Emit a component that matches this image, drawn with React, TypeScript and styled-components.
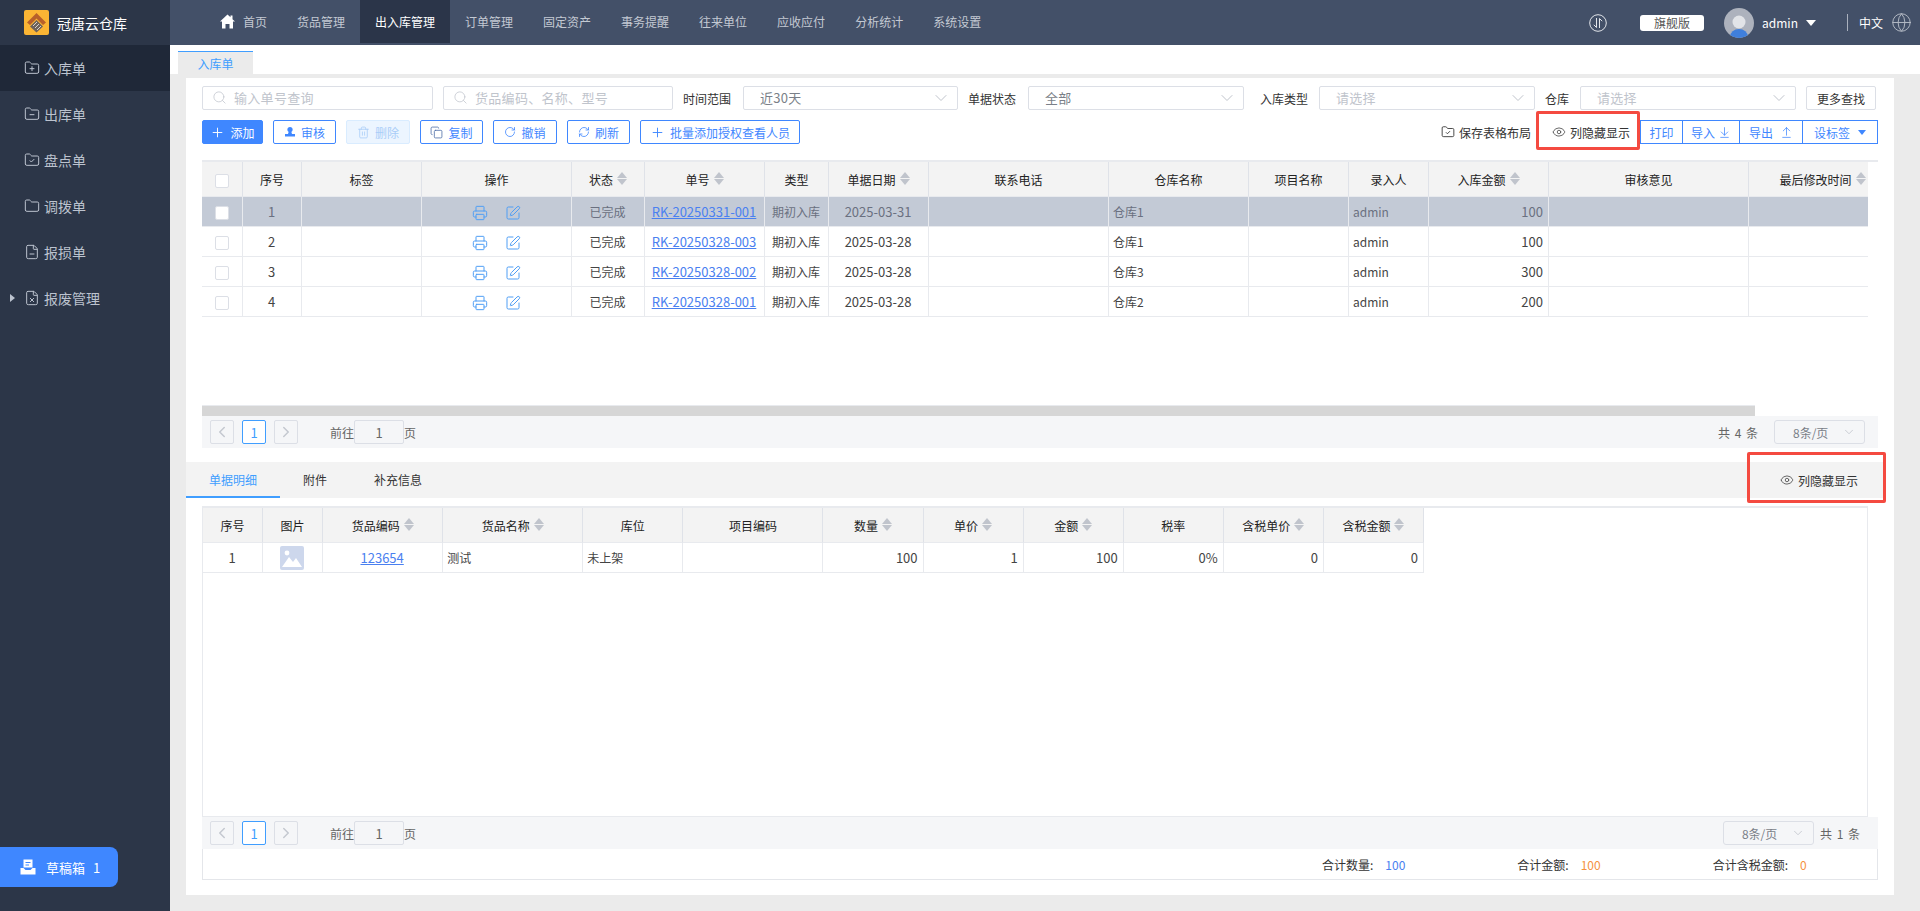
import React from 'react';
import styled, { createGlobalStyle } from 'styled-components';
import {
  ArrowDownToLine,
  ArrowUpFromLine,
  ChevronDown,
  ChevronLeft,
  ChevronRight,
  Copy,
  Eye,
  FileMinus,
  FileX,
  Folder,
  FolderCheck,
  FolderMinus,
  FolderPlus,
  Globe,
  Plus,
  Printer,
  RefreshCw,
  RotateCw,
  Search,
  SquarePen,
  Trash2,
} from 'lucide-react';

const GlobalStyle = createGlobalStyle`
  html, body {
    margin: 0;
    height: 100%;
    overflow: hidden;
    background: #ebebeb;
    font-family: "Noto Sans CJK SC", "Noto Sans", sans-serif;
    font-size: 12px;
    color: #333;
  }
  * { box-sizing: border-box; }
`;

const Shell = styled.div`
  display: grid;
  grid-template-columns: 170px 1fr;
  height: 911px;
`;

const Sidebar = styled.aside`
  display: flex;
  flex-direction: column;
  background: #2c3648;
`;

const Brand = styled.div`
  display: flex;
  align-items: center;
  gap: 8px;
  height: 45px;
  padding-left: 24px;
  color: #fff;
  font-size: 14px;
`;

const SideItem = styled.div<{ $active?: boolean }>`
  display: flex;
  align-items: center;
  height: 46px;
  padding-left: 10px;
  gap: 4.5px;
  font-size: 14px;
  color: #bcc3cf;
  background: ${(p) => (p.$active ? '#1f2838' : 'transparent')};
`;

const ArrowSlot = styled.span`
  display: flex;
  width: 9px;
`;

const ExpandArrow = styled.i`
  border-left: 5px solid #bcc3cf;
  border-top: 4px solid transparent;
  border-bottom: 4px solid transparent;
`;

const DraftButton = styled.div`
  display: flex;
  align-items: center;
  margin-top: auto;
  margin-bottom: 24px;
  width: 118px;
  height: 40px;
  padding-left: 20px;
  gap: 10px;
  color: #fff;
  font-size: 13px;
  background: #3f87ff;
  border-radius: 0 8px 8px 0;
`;

const DraftCount = styled.span`
  margin-left: -2px;
`;

const Main = styled.main`
  display: flex;
  flex-direction: column;
  min-width: 0;
`;

const Topbar = styled.header`
  display: flex;
  align-items: flex-start;
  height: 45px;
  padding-left: 35px;
  background: #435068;
`;

const NavItem = styled.div<{ $active?: boolean }>`
  display: flex;
  align-items: center;
  gap: 8px;
  height: 43px;
  padding: 0 15px;
  font-size: 12px;
  color: ${(p) => (p.$active ? '#fff' : '#c3c9d3')};
  background: ${(p) => (p.$active ? '#2b3549' : 'transparent')};
`;

const TopRight = styled.div`
  display: flex;
  align-items: center;
  height: 45px;
  margin-left: auto;
  padding-right: 8px;
  color: #fff;
`;

const EditionBadge = styled.span`
  display: flex;
  align-items: center;
  justify-content: center;
  width: 64px;
  height: 16px;
  margin: 0 20px 0 33px;
  font-size: 12px;
  color: #555;
  background: #fff;
  border-radius: 3px;
`;

const UserName = styled.span`
  margin: 0 8px;
  font-size: 12px;
`;

const UserCaret = styled.i`
  border-top: 6px solid #fff;
  border-left: 5px solid transparent;
  border-right: 5px solid transparent;
`;

const LangDivider = styled.i`
  width: 1px;
  height: 17px;
  margin: 0 11px 0 31px;
  background: #aab1be;
`;

const LangText = styled.span`
  margin-right: 8px;
  font-size: 12px;
`;

const TabStrip = styled.div`
  display: flex;
  align-items: flex-end;
  height: 29px;
  padding-left: 8px;
  background: #fff;
`;

const PageTab = styled.div`
  display: flex;
  align-items: center;
  justify-content: center;
  width: 75px;
  height: 23px;
  color: #409eff;
  background: #ebebeb;
  border-top: 1px solid #409eff;
`;

const Panel = styled.section`
  width: 1708px;
  height: 817px;
  margin: 4px 0 0 16px;
  padding-top: 8px;
  background: #fff;
`;

const FilterRow = styled.div`
  display: flex;
  gap: 10px;
  height: 24px;
  margin: 0 16px;
`;

const Field = styled.div<{ $w: number }>`
  display: flex;
  align-items: center;
  gap: 7px;
  width: ${(p) => p.$w}px;
  height: 24px;
  padding: 0 9px 2px;
  border: 1px solid #dcdfe6;
  border-radius: 2px;
  font-size: 13px;
  letter-spacing: 0.3px;
  color: #c0c4cc;
  svg {
    flex: none;
  }
`;

const SelectField = styled(Field)<{ $filled?: boolean }>`
  padding: 0 6px 2px 16px;
  justify-content: space-between;
  color: ${(p) => (p.$filled ? '#7a7f88' : '#c0c4cc')};
  svg {
    color: #c0c4cc;
    margin-top: 2px;
  }
`;

const FilterLabel = styled.span<{ $w: number; $shift?: number }>`
  width: ${(p) => p.$w}px;
  margin-left: ${(p) => p.$shift ?? 0}px;
  line-height: 26px;
  white-space: nowrap;
  color: #333;
`;

const MoreButton = styled.button`
  width: 70px;
  height: 24px;
  padding: 0;
  font: inherit;
  color: #333;
  background: #fff;
  border: 1px solid #dcdfe6;
  border-radius: 2px;
`;

const ToolRow = styled.div`
  display: flex;
  align-items: center;
  gap: 10px;
  height: 24px;
  margin: 10px 16px 0;
`;

const ToolButton = styled.button<{ $w: number; $primary?: boolean; $disabled?: boolean }>`
  display: flex;
  align-items: center;
  justify-content: center;
  gap: 5px;
  width: ${(p) => p.$w}px;
  height: 24px;
  padding: 0;
  font: inherit;
  border-radius: 2px;
  color: ${(p) => (p.$primary ? '#fff' : p.$disabled ? '#a9cdf8' : '#3f87ff')};
  background: ${(p) => (p.$primary ? '#3f87ff' : p.$disabled ? '#ecf5ff' : '#fff')};
  border: 1px solid ${(p) => (p.$primary ? '#3f87ff' : p.$disabled ? '#d9ecff' : '#3f87ff')};
`;

const SaveLayout = styled.div`
  display: flex;
  align-items: center;
  gap: 4px;
  margin-left: auto;
  margin-right: 11px;
  color: #333;
`;

const ColumnToggle = styled.div`
  position: relative;
  display: flex;
  align-items: center;
  gap: 4px;
  color: #333;
  svg {
    color: #555;
  }
`;

const Highlight = styled.span`
  position: absolute;
  top: -13px;
  bottom: -9px;
  left: -16px;
  right: -10px;
  border: 3px solid #f44a40;
  border-radius: 2px;
`;

const ButtonGroup = styled.div`
  display: flex;
`;

const GroupButton = styled(ToolButton)`
  border-radius: 0;
  gap: 3px;
  & + & {
    margin-left: -1px;
  }
`;

const ExportButton = styled(GroupButton)`
  gap: 7px;
`;

const GroupCaret = styled.i`
  margin-left: 5px;
  border-top: 5px solid #3f87ff;
  border-left: 4px solid transparent;
  border-right: 4px solid transparent;
`;

const TableBlock = styled.div`
  width: 1676px;
  margin: 16px 16px 0;
  border-top: 2px solid #e8eaee;
`;

const TableClip = styled.div<{ $h: number }>`
  width: 1666px;
  height: ${(p) => p.$h}px;
  overflow: hidden;
`;

const Grid = styled.table<{ $w: number }>`
  width: ${(p) => p.$w}px;
  table-layout: fixed;
  border-collapse: separate;
  border-spacing: 0;
`;

const HeadCell = styled.th`
  height: 35px;
  padding: 0;
  font-weight: 400;
  font-size: 12px;
  color: #222;
  text-align: center;
  background: #f3f3f3;
  border-right: 1px solid #dfe2e8;
  border-bottom: 1px solid #e8eaee;
`;

const HeadInner = styled.span`
  display: inline-flex;
  align-items: center;
  gap: 4px;
`;

const SortMark = styled.span`
  display: inline-flex;
  flex-direction: column;
  gap: 1px;
  margin-bottom: 2px;
  i {
    width: 0;
    height: 0;
    border-left: 5px solid transparent;
    border-right: 5px solid transparent;
  }
  i:first-child {
    border-bottom: 6px solid #c0c4cc;
  }
  i:last-child {
    border-top: 6px solid #c0c4cc;
  }
`;

const BodyRow = styled.tr<{ $selected?: boolean }>`
  td {
    background: ${(p) => (p.$selected ? '#c3cad6' : '#fff')};
    color: ${(p) => (p.$selected ? '#6a7080' : '#444')};
  }
`;

const Cell = styled.td<{ $align?: 'left' | 'right' | 'center'; $num?: boolean; $h?: number }>`
  height: ${(p) => p.$h ?? 30}px;
  padding: 0 5px 0 4px;
  font-size: ${(p) => (p.$num ? 13 : 12)}px;
  text-align: ${(p) => p.$align ?? 'center'};
  white-space: nowrap;
  overflow: hidden;
  border-right: 1px solid #e8eaee;
  border-bottom: 1px solid #e8eaee;
`;

const DocLink = styled.a`
  color: #4a80f0;
  text-decoration: underline;
`;

const CheckBox = styled.span`
  display: inline-block;
  width: 14px;
  height: 14px;
  vertical-align: middle;
  background: #fff;
  border: 1px solid #dcdfe6;
  border-radius: 2px;
`;

const OpIcons = styled.span`
  display: inline-flex;
  gap: 17px;
  vertical-align: middle;
  color: #4f9ef5;
`;

const HScroll = styled.div`
  height: 11px;
  border-top: 1px solid #e8eaee;
  width: 1553px;
  background: #d6d6d6;
`;

const Pager = styled.div`
  display: flex;
  align-items: center;
  gap: 8px;
  width: 1676px;
  height: 32px;
  padding-left: 8px;
  color: #666;
  background: #f5f6f8;
`;

const PageBtn = styled.span<{ $current?: boolean }>`
  display: flex;
  align-items: center;
  justify-content: center;
  width: 24px;
  height: 24px;
  font-size: 13px;
  border-radius: 2px;
  color: ${(p) => (p.$current ? '#409eff' : '#c4c8d0')};
  background: ${(p) => (p.$current ? '#fff' : 'transparent')};
  border: 1px solid ${(p) => (p.$current ? '#409eff' : '#dcdfe6')};
`;

const GotoGroup = styled.div`
  display: flex;
  align-items: center;
  margin-left: 24px;
`;

const GotoInput = styled.span`
  display: flex;
  align-items: center;
  justify-content: center;
  width: 50px;
  height: 24px;
  font-size: 13px;
  border: 1px solid #dcdfe6;
  border-radius: 2px;
`;

const PagerRight = styled.div<{ $end: number; $gap: number }>`
  display: flex;
  align-items: center;
  gap: ${(p) => p.$gap}px;
  margin-left: auto;
  padding-right: ${(p) => p.$end}px;
`;

const PageSize = styled.span`
  display: flex;
  align-items: center;
  justify-content: space-between;
  width: 91px;
  height: 24px;
  padding: 0 8px 0 18px;
  font-size: 12px;
  color: #7a7f88;
  border: 1px solid #dcdfe6;
  border-radius: 3px;
  svg {
    color: #c0c4cc;
  }
`;

const TotalText = styled.span`
  letter-spacing: 1px;
  color: #666;
`;

const DetailTabs = styled.div`
  display: flex;
  width: 1699px;
  height: 36px;
  margin-top: 14px;
  background: #f3f3f3;
`;

const DetailTab = styled.div<{ $active?: boolean; $w: number }>`
  display: flex;
  align-items: center;
  justify-content: center;
  width: ${(p) => p.$w}px;
  color: ${(p) => (p.$active ? '#409eff' : '#333')};
  border-bottom: 2px solid ${(p) => (p.$active ? '#409eff' : 'transparent')};
`;

const DetailToggleWrap = styled.div`
  display: flex;
  align-items: center;
  margin-left: auto;
  padding-right: 27px;
`;

const DetailHighlight = styled(Highlight)`
  top: -20px;
  bottom: -14px;
  left: -33px;
  right: -28px;
`;

const DetailBlock = styled.div`
  width: 1676px;
  margin: 8px 16px 0;
`;

const DetailFrame = styled.div`
  width: 1666px;
  height: 311px;
  border-top: 2px solid #e8eaee;
  border-left: 1px solid #e8eaee;
  border-right: 1px solid #e8eaee;
  border-bottom: 1px solid #e8eaee;
`;

const ThumbBox = styled.span`
  display: inline-flex;
  vertical-align: middle;
`;

const SummaryBar = styled.div`
  display: flex;
  align-items: center;
  height: 31px;
  color: #333;
  border: 1px solid #e4e6ea;
  border-top: 0;
`;

const SummaryItem = styled.span<{ $left: number }>`
  display: flex;
  gap: 12px;
  margin-left: ${(p) => p.$left}px;
`;

const SummaryValue = styled.span<{ $tone: string }>`
  color: ${(p) => p.$tone};
`;

const Logo = () => (
  <svg width="25" height="25" viewBox="0 0 25 25">
    <rect width="25" height="25" rx="2" fill="#fbb534" />
    <path d="M12.5 3 L22 12.5 L19 15 L12.5 8.5 L6 15 L3 12.5 Z" fill="#b8602a" />
    <path d="M12.5 10 L19 16.5 L12.5 22.5 L6 16.5 Z" fill="#6e625a" />
    <path d="M9 16 L13 12 M11 18 L15 14 M13 20 L17 16" stroke="#d8d3cc" strokeWidth="1" />
  </svg>
);

const HomeIcon = () => (
  <svg width="15" height="15" viewBox="0 0 15 15" fill="#fff">
    <path d="M7.5 0.5 L10.5 3.3 V1.5 H12.5 V5.2 L15 7.5 H13 V14.5 H9.5 V10 H5.5 V14.5 H2 V7.5 H0 Z" />
  </svg>
);

const TransferIcon = () => (
  <svg width="18" height="18" viewBox="0 0 18 18" fill="none" stroke="#e2e5ea" strokeWidth="1">
    <circle cx="9" cy="9" r="8.3" />
    <path d="M7.5 4 V13.5 L4.8 10.8 M10.5 14 V4.5 L13.2 7.2" />
  </svg>
);

const Avatar = () => (
  <svg width="30" height="30" viewBox="0 0 30 30">
    <defs>
      <clipPath id="avatar-clip">
        <circle cx="15" cy="15" r="15" />
      </clipPath>
    </defs>
    <circle cx="15" cy="15" r="15" fill="#adb2bd" />
    <circle cx="15" cy="14" r="6.5" fill="#e2e4e8" />
    <ellipse cx="15" cy="29" rx="9" ry="8" fill="#3f7fdc" clipPath="url(#avatar-clip)" />
  </svg>
);

const AuditIcon = () => (
  <svg width="12" height="12" viewBox="0 0 12 12" fill="#3f87ff">
    <circle cx="6" cy="3.6" r="2.6" />
    <path d="M4.6 6 H7.4 L8 8 H11 V10.5 H1 V8 H4 Z" />
  </svg>
);

const DraftIcon = () => (
  <svg width="16" height="16" viewBox="0 0 16 16" fill="#fff">
    <path d="M3.5 0.5 H12.5 V8.5 H3.5 Z M5.5 3 V4 H10.5 V3 Z M5.5 5.5 V6.5 H9 V5.5 Z" fillRule="evenodd" />
    <path d="M0.5 9 H3.5 L5.5 11 H10.5 L12.5 9 H15.5 V15.5 H0.5 Z" />
  </svg>
);

const ThumbIcon = () => (
  <svg width="24" height="24" viewBox="0 0 24 24">
    <rect width="24" height="24" rx="2" fill="#cdd7ec" />
    <circle cx="7" cy="7" r="2.4" fill="#fff" />
    <path d="M2 21 L9 11 L13 16 L16 12 L22 21 Z" fill="#fff" />
  </svg>
);

type Col = { w: number; label: string; sort?: boolean };

const masterCols: Col[] = [
  { w: 41, label: '' },
  { w: 59, label: '序号' },
  { w: 120, label: '标签' },
  { w: 150, label: '操作' },
  { w: 73, label: '状态', sort: true },
  { w: 120, label: '单号', sort: true },
  { w: 64, label: '类型' },
  { w: 100, label: '单据日期', sort: true },
  { w: 180, label: '联系电话' },
  { w: 140, label: '仓库名称' },
  { w: 100, label: '项目名称' },
  { w: 80, label: '录入人' },
  { w: 120, label: '入库金额', sort: true },
  { w: 200, label: '审核意见' },
  { w: 148, label: '最后修改时间', sort: true },
];

const detailCols: Col[] = [
  { w: 60, label: '序号' },
  { w: 60, label: '图片' },
  { w: 120, label: '货品编码', sort: true },
  { w: 140, label: '货品名称', sort: true },
  { w: 100, label: '库位' },
  { w: 140, label: '项目编码' },
  { w: 100, label: '数量', sort: true },
  { w: 100, label: '单价', sort: true },
  { w: 100, label: '金额', sort: true },
  { w: 100, label: '税率' },
  { w: 100, label: '含税单价', sort: true },
  { w: 100, label: '含税金额', sort: true },
];

const masterRows = [
  { no: 'RK-20250331-001', date: '2025-03-31', wh: '仓库1', amount: 100 },
  { no: 'RK-20250328-003', date: '2025-03-28', wh: '仓库1', amount: 100 },
  { no: 'RK-20250328-002', date: '2025-03-28', wh: '仓库3', amount: 300 },
  { no: 'RK-20250328-001', date: '2025-03-28', wh: '仓库2', amount: 200 },
];

const navItems = ['货品管理', '出入库管理', '订单管理', '固定资产', '事务提醒', '往来单位', '应收应付', '分析统计', '系统设置'];

const sideItems = [
  { label: '入库单', icon: FolderPlus, active: true },
  { label: '出库单', icon: FolderMinus },
  { label: '盘点单', icon: FolderCheck },
  { label: '调拨单', icon: Folder },
  { label: '报损单', icon: FileMinus },
  { label: '报废管理', icon: FileX, expandable: true },
];

const TableHead: React.FC<{ cols: Col[] }> = ({ cols }) => (
  <>
    <colgroup>
      {cols.map((c, i) => (
        <col key={i} width={c.w} />
      ))}
    </colgroup>
    <thead>
      <tr>
        {cols.map((c, i) => (
          <HeadCell key={i}>
            {i === 0 && !c.label ? (
              <CheckBox />
            ) : (
              <HeadInner>
                {c.label}
                {c.sort && (
                  <SortMark>
                    <i />
                    <i />
                  </SortMark>
                )}
              </HeadInner>
            )}
          </HeadCell>
        ))}
      </tr>
    </thead>
  </>
);

const PagerLeft: React.FC = () => (
  <>
    <PageBtn>
      <ChevronLeft size={18} strokeWidth={2} />
    </PageBtn>
    <PageBtn $current>1</PageBtn>
    <PageBtn>
      <ChevronRight size={18} strokeWidth={2} />
    </PageBtn>
    <GotoGroup>
      前往
      <GotoInput>1</GotoInput>页
    </GotoGroup>
  </>
);

const App: React.FC = () => (
  <>
    <GlobalStyle />
    <Shell>
      <Sidebar>
        <Brand>
          <Logo />
          冠唐云仓库
        </Brand>
        {sideItems.map((item) => (
          <SideItem key={item.label} $active={item.active}>
            <ArrowSlot>{item.expandable && <ExpandArrow />}</ArrowSlot>
            <item.icon size={16} strokeWidth={1.5} />
            {item.label}
          </SideItem>
        ))}
        <DraftButton>
          <DraftIcon />
          草稿箱
          <DraftCount>1</DraftCount>
        </DraftButton>
      </Sidebar>

      <Main>
        <Topbar>
          <NavItem>
            <HomeIcon />
            首页
          </NavItem>
          {navItems.map((n) => (
            <NavItem key={n} $active={n === '出入库管理'}>
              {n}
            </NavItem>
          ))}
          <TopRight>
            <TransferIcon />
            <EditionBadge>旗舰版</EditionBadge>
            <Avatar />
            <UserName>admin</UserName>
            <UserCaret />
            <LangDivider />
            <LangText>中文</LangText>
            <Globe size={21} strokeWidth={1.1} color="#b4bac5" />
          </TopRight>
        </Topbar>

        <TabStrip>
          <PageTab>入库单</PageTab>
        </TabStrip>

        <Panel>
          <FilterRow>
            <Field $w={231}>
              <Search size={15} strokeWidth={1.2} />
              输入单号查询
            </Field>
            <Field $w={230}>
              <Search size={15} strokeWidth={1.2} />
              货品编码、名称、型号
            </Field>
            <FilterLabel $w={50}>时间范围</FilterLabel>
            <SelectField $w={215} $filled>
              近30天
              <ChevronDown size={20} strokeWidth={1.2} />
            </SelectField>
            <FilterLabel $w={50}>单据状态</FilterLabel>
            <SelectField $w={216} $filled>
              全部
              <ChevronDown size={20} strokeWidth={1.2} />
            </SelectField>
            <FilterLabel $w={49} $shift={6}>
              入库类型
            </FilterLabel>
            <SelectField $w={216}>
              请选择
              <ChevronDown size={20} strokeWidth={1.2} />
            </SelectField>
            <FilterLabel $w={25}>仓库</FilterLabel>
            <SelectField $w={216}>
              请选择
              <ChevronDown size={20} strokeWidth={1.2} />
            </SelectField>
            <MoreButton>更多查找</MoreButton>
          </FilterRow>

          <ToolRow>
            <ToolButton $w={61} $primary>
              <Plus size={15} strokeWidth={1.5} />
              添加
            </ToolButton>
            <ToolButton $w={63}>
              <AuditIcon />
              审核
            </ToolButton>
            <ToolButton $w={64} $disabled>
              <Trash2 size={13} strokeWidth={1.5} />
              删除
            </ToolButton>
            <ToolButton $w={63}>
              <Copy size={13} strokeWidth={1.5} color="#4f6fa8" />
              复制
            </ToolButton>
            <ToolButton $w={64}>
              <RotateCw size={12} strokeWidth={1.6} />
              撤销
            </ToolButton>
            <ToolButton $w={63}>
              <RefreshCw size={12} strokeWidth={1.6} />
              刷新
            </ToolButton>
            <ToolButton $w={160}>
              <Plus size={15} strokeWidth={1.5} />
              批量添加授权查看人员
            </ToolButton>

            <SaveLayout>
              <FolderCheck size={14} strokeWidth={1.5} />
              保存表格布局
            </SaveLayout>
            <ColumnToggle>
              <Eye size={14} strokeWidth={1.5} />
              列隐藏显示
              <Highlight />
            </ColumnToggle>
            <ButtonGroup>
              <GroupButton $w={43}>打印</GroupButton>
              <GroupButton $w={58}>
                导入
                <ArrowDownToLine size={13} strokeWidth={1.4} />
              </GroupButton>
              <ExportButton $w={64}>
                导出
                <ArrowUpFromLine size={13} strokeWidth={1.4} />
              </ExportButton>
              <GroupButton $w={76}>
                设标签
                <GroupCaret />
              </GroupButton>
            </ButtonGroup>
          </ToolRow>

          <TableBlock>
            <TableClip $h={243}>
              <Grid $w={1695}>
                <TableHead cols={masterCols} />
                <tbody>
                  {masterRows.map((r, i) => (
                    <BodyRow key={r.no} $selected={i === 0}>
                      <Cell>
                        <CheckBox />
                      </Cell>
                      <Cell $num>{i + 1}</Cell>
                      <Cell />
                      <Cell>
                        <OpIcons>
                          <Printer size={16} strokeWidth={1.5} />
                          <SquarePen size={16} strokeWidth={1.5} />
                        </OpIcons>
                      </Cell>
                      <Cell>已完成</Cell>
                      <Cell $num>
                        <DocLink>{r.no}</DocLink>
                      </Cell>
                      <Cell>期初入库</Cell>
                      <Cell $num>{r.date}</Cell>
                      <Cell />
                      <Cell $align="left">{r.wh}</Cell>
                      <Cell />
                      <Cell $align="left">admin</Cell>
                      <Cell $align="right" $num>
                        {r.amount}
                      </Cell>
                      <Cell />
                      <Cell />
                    </BodyRow>
                  ))}
                </tbody>
              </Grid>
            </TableClip>
            <HScroll />
            <Pager>
              <PagerLeft />
              <PagerRight $end={13} $gap={15}>
                <TotalText>共 4 条</TotalText>
                <PageSize>
                  8条/页
                  <ChevronDown size={14} strokeWidth={1.4} />
                </PageSize>
              </PagerRight>
            </Pager>
          </TableBlock>

          <DetailTabs>
            <DetailTab $w={94} $active>
              单据明细
            </DetailTab>
            <DetailTab $w={70}>附件</DetailTab>
            <DetailTab $w={96}>补充信息</DetailTab>
            <DetailToggleWrap>
              <ColumnToggle>
                <Eye size={14} strokeWidth={1.5} />
                列隐藏显示
                <DetailHighlight />
              </ColumnToggle>
            </DetailToggleWrap>
          </DetailTabs>

          <DetailBlock>
            <DetailFrame>
              <Grid $w={1221}>
                <TableHead cols={detailCols} />
                <tbody>
                  <BodyRow>
                    <Cell $num>1</Cell>
                    <Cell>
                      <ThumbBox>
                        <ThumbIcon />
                      </ThumbBox>
                    </Cell>
                    <Cell $num>
                      <DocLink>123654</DocLink>
                    </Cell>
                    <Cell $align="left">测试</Cell>
                    <Cell $align="left">未上架</Cell>
                    <Cell />
                    <Cell $align="right" $num>100</Cell>
                    <Cell $align="right" $num>1</Cell>
                    <Cell $align="right" $num>100</Cell>
                    <Cell $align="right" $num>0%</Cell>
                    <Cell $align="right" $num>0</Cell>
                    <Cell $align="right" $num>0</Cell>
                  </BodyRow>
                </tbody>
              </Grid>
            </DetailFrame>
            <Pager>
              <PagerLeft />
              <PagerRight $end={17} $gap={6}>
                <PageSize>
                  8条/页
                  <ChevronDown size={14} strokeWidth={1.4} />
                </PageSize>
                <TotalText>共 1 条</TotalText>
              </PagerRight>
            </Pager>
            <SummaryBar>
              <SummaryItem $left={1119}>
                合计数量:
                <SummaryValue $tone="#4a80f0">100</SummaryValue>
              </SummaryItem>
              <SummaryItem $left={112}>
                合计金额:
                <SummaryValue $tone="#f5923e">100</SummaryValue>
              </SummaryItem>
              <SummaryItem $left={112}>
                合计含税金额:
                <SummaryValue $tone="#f5923e">0</SummaryValue>
              </SummaryItem>
            </SummaryBar>
          </DetailBlock>
        </Panel>
      </Main>
    </Shell>
  </>
);

export default App;
